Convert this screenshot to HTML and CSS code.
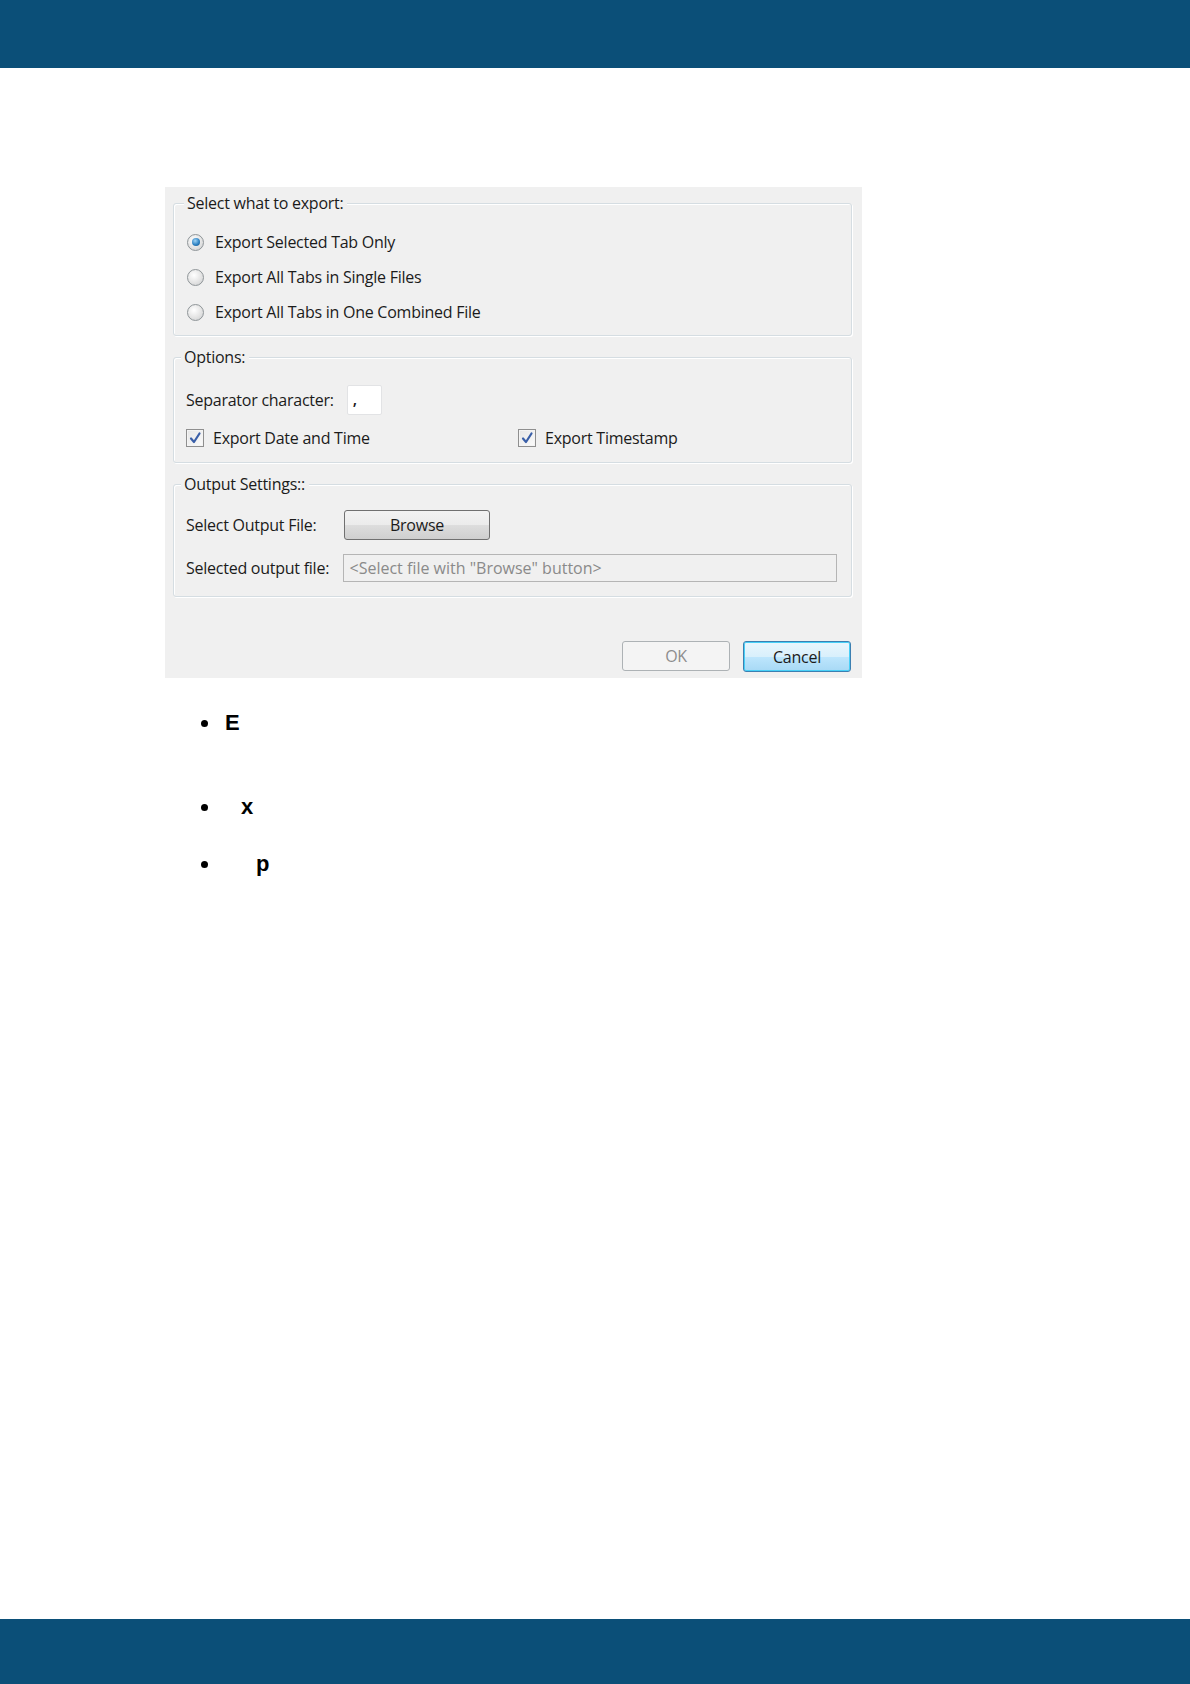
FILE: index.html
```html
<!DOCTYPE html>
<html>
  <head lang="en">
    <meta charset="UTF-8" />
    <title>Export</title>
    <link rel="stylesheet" href="styles.css">
  </head>

  <body>
    <div class="topbar"></div>

    <div class="page">
      <div class="dialog">
        <div class="group group-export">
          <div class="legend">Select what to export:</div>
          <div class="radio-row">
            <span class="radio checked"></span>
            <span>Export Selected Tab Only</span>
          </div>
          <div class="radio-row">
            <span class="radio"></span>
            <span>Export All Tabs in Single Files</span>
          </div>
          <div class="radio-row">
            <span class="radio"></span>
            <span>Export All Tabs in One Combined File</span>
          </div>
        </div>

        <div class="group group-options">
          <div class="legend">Options:</div>
          <div class="sep-row">
            <span>Separator character:</span>
            <span class="sep-input">,</span>
          </div>
          <div class="check-row">
            <div class="check-item">
              <span class="checkbox">
                <svg width="14" height="14" viewBox="0 0 14 14"><path d="M3 7.5 L6 11 L11.5 2.5" fill="none" stroke="#3a5fa8" stroke-width="2.2" stroke-linecap="round" stroke-linejoin="round"/></svg>
              </span>
              <span>Export Date and Time</span>
            </div>
            <div class="check-item">
              <span class="checkbox">
                <svg width="14" height="14" viewBox="0 0 14 14"><path d="M3 7.5 L6 11 L11.5 2.5" fill="none" stroke="#3a5fa8" stroke-width="2.2" stroke-linecap="round" stroke-linejoin="round"/></svg>
              </span>
              <span>Export Timestamp</span>
            </div>
          </div>
        </div>

        <div class="group group-output">
          <div class="legend">Output Settings::</div>
          <div class="out-row">
            <span class="out-label">Select Output File:</span>
            <span class="btn btn-browse">Browse</span>
          </div>
          <div class="out-row out-row-file">
            <span class="out-label">Selected output file:</span>
            <span class="file-box">&lt;Select file with "Browse" button&gt;</span>
          </div>
        </div>

        <div class="actions">
          <span class="btn btn-ok">OK</span>
          <span class="btn btn-cancel">Cancel</span>
        </div>
      </div>

      <ul class="bullets">
        <li class="b1">E</li>
        <li class="b2">x</li>
        <li class="b3">p</li>
      </ul>
    </div>

    <div class="bottombar"></div>
  </body>
</html>
```

FILE: styles.css
```css
html,
body,
div,
ul,
li {
  margin: 0;
  padding: 0;
}

body {
  background: #fff;
  width: 1190px;
  height: 1684px;
  display: flex;
  flex-direction: column;
  font-family: "Open Sans", "Noto Sans", sans-serif;
  color: #1b1b1b;
}

.topbar {
  height: 68px;
  background: #0b4f78;
}

.page {
  flex: 1;
  padding: 119px 0 0 165px;
}

.bottombar {
  height: 65px;
  background: #0b4f78;
}

/* dialog */

.dialog {
  width: 697px;
  height: 491px;
  background: #f0f0f0;
  padding: 16px 10px 0 8px;
  box-sizing: border-box;
  font-size: 16px;
  letter-spacing: -0.25px;
  display: flex;
  flex-direction: column;
}

.group {
  border: 1px solid #d5dde2;
  border-radius: 3px;
  box-shadow: inset 1px 1px 0 #fff, 1px 1px 0 #fff;
  padding: 0 14px 0 13px;
}

.legend {
  width: fit-content;
  margin: -11px 0 0 -5px;
  padding: 0 4px 0 3px;
  background: #f0f0f0;
  line-height: 20px;
}

.group-export {
  height: 133px;
  box-sizing: border-box;
}

.group-export .legend {
  margin-left: -3px;
}

.radio-row {
  display: flex;
  align-items: center;
  height: 20px;
  margin-top: 15px;
  gap: 11px;
}

.group-export .legend + .radio-row {
  margin-top: 19px;
}

.radio {
  width: 15px;
  height: 15px;
  border: 1px solid #8f9598;
  border-radius: 50%;
  background: radial-gradient(circle at 40% 35%, #fff 0%, #e4e4e4 55%, #c9cbcd 100%);
  box-sizing: content-box;
  position: relative;
}

.radio.checked::after {
  content: '';
  position: absolute;
  left: 3.5px;
  top: 3.5px;
  width: 8px;
  height: 8px;
  border-radius: 50%;
  background: radial-gradient(circle at 40% 35%, #9ed3f5 0%, #2f83c4 55%, #15507f 100%);
}

.group-options {
  margin-top: 21px;
  height: 106px;
  box-sizing: border-box;
  padding-left: 12px;
}

.sep-row {
  display: flex;
  align-items: center;
  gap: 13px;
  margin-top: 18px;
}

.sep-input {
  width: 35px;
  height: 30px;
  background: #fff;
  border: 1px solid #e2e3e5;
  border-radius: 2px;
  padding-left: 5px;
  box-sizing: border-box;
  line-height: 26px;
  font-weight: 600;
}

.check-row {
  display: grid;
  grid-template-columns: 332px auto;
  margin-top: 13px;
}

.check-item {
  display: flex;
  align-items: center;
  gap: 9px;
  height: 20px;
}

.checkbox {
  width: 16px;
  height: 16px;
  border: 1px solid #8f8f8f;
  background: linear-gradient(135deg, #e6e6e6, #fbfbfb);
  box-shadow: inset 0 0 0 1px #f4f4f4;
  display: flex;
  align-items: center;
  justify-content: center;
}

.group-output {
  margin-top: 21px;
  height: 113px;
  box-sizing: border-box;
  padding-left: 12px;
}

.out-row {
  display: flex;
  align-items: center;
  margin-top: 16px;
}

.out-label {
  width: 158px;
}

.out-row-file {
  margin-top: 14px;
}

.out-row-file .out-label {
  width: 157px;
}

.btn {
  display: flex;
  align-items: center;
  justify-content: center;
  box-sizing: border-box;
  border-radius: 3px;
}

.btn-browse {
  width: 146px;
  height: 30px;
  border: 1px solid #707070;
  background: linear-gradient(#f2f2f2 0%, #ebebeb 50%, #dddddd 51%, #cfcfcf 100%);
}

.file-box {
  width: 496px;
  height: 28px;
  border: 1px solid #b5b5b5;
  background: #f0f0f0;
  color: #8a8a8a;
  padding-left: 6px;
  box-sizing: border-box;
  line-height: 26px;
  letter-spacing: 0;
}

.actions {
  display: flex;
  justify-content: flex-end;
  gap: 13px;
  margin-top: 44px;
  padding-right: 1px;
}

.btn-ok {
  width: 108px;
  height: 30px;
  border: 1px solid #adb2b5;
  background: #f4f4f4;
  color: #8d8d8d;
}

.btn-cancel {
  width: 108px;
  height: 31px;
  border: 1px solid #3c7fb1;
  box-shadow: inset 0 0 0 1px #48d0f7;
  background: linear-gradient(#eaf6fd 0%, #d9f0fc 50%, #bee6fd 51%, #a7d9f5 100%);
}

/* list below */

.bullets {
  list-style: disc;
  margin: 32px 0 0 56px;
  font: bold 22px "Liberation Sans", Arial, sans-serif;
  color: #000;
}

.bullets li {
  line-height: 26px;
}

.b1 {
  padding-left: 4px;
}

.b2 {
  margin-top: 58px;
  padding-left: 20px;
}

.b3 {
  margin-top: 31px;
  padding-left: 35px;
}
```
